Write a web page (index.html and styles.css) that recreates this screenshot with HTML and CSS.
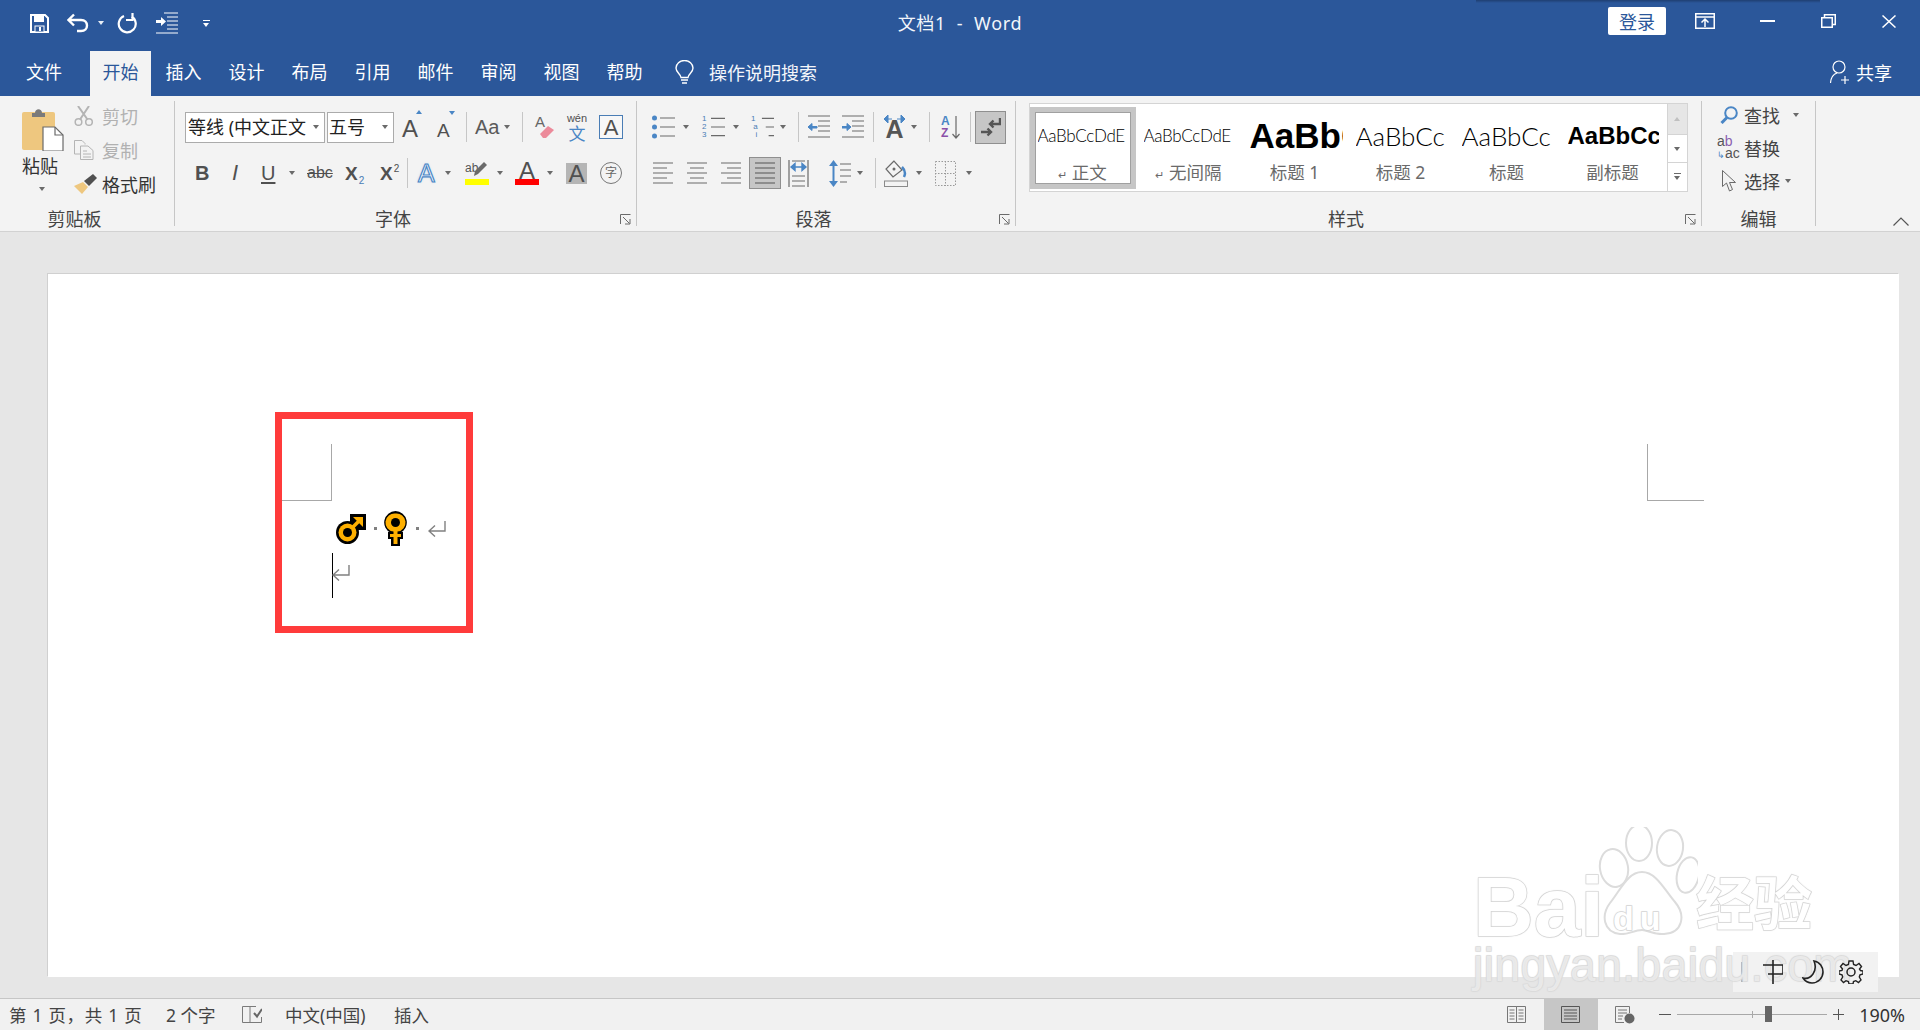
FILE: index.html
```html
<!DOCTYPE html>
<html lang="zh-CN">
<head>
<meta charset="utf-8">
<title>文档1 - Word</title>
<link rel="stylesheet" href="styles.css">
</head>
<body>
<div class="app">
  <header class="titlebar">
    <div class="qat">
      <svg width="19" height="19" viewBox="0 0 19 19"><path d="M1 1H15L18 4V18H1Z" fill="none" stroke="#fff" stroke-width="2"/><rect x="4" y="1" width="10" height="7" fill="#fff"/><rect x="5" y="12" width="9" height="6" fill="#2b579a" stroke="#fff"/><rect x="9" y="13" width="2" height="4" fill="#fff"/></svg>
      <svg width="22" height="20" viewBox="0 0 22 20"><path d="M2 7H14C18 7 20 9.500 20 12.500S18 18 14 18H10M7 1.500L1.500 7L7 12.500" fill="none" stroke="#fff" stroke-width="2.400"/></svg>
      <i class="caret white"></i>
      <svg width="21" height="21" viewBox="0 0 21 21"><path d="M6.500 3.500A8.500 8.500 0 1 0 14 3M5.500 0V7H12" fill="none" stroke="#fff" stroke-width="2.200" transform="translate(21 0) scale(-1 1)"/></svg>
      <svg width="22" height="22" viewBox="0 0 22 22"><path d="M8 1H22M11 5H22M11 9H22M11 13H22M11 17H22M0 21H22" stroke="#fff" fill="none"/><path d="M0 8H5V5L10 9.500L5 14V11H0Z" fill="#fff"/></svg>
      <span class="qat-more"></span>
    </div>
    <div class="doc-title">文档1&nbsp; -&nbsp; Word</div>
    <div class="win-controls">
      <button class="login">登录</button>
      <svg class="wc-ribbon" width="20" height="16" viewBox="0 0 20 16"><path d="M.75.750H19.250V15.250H.75ZM1 4H19M10 14V7M6.500 9.500L10 6L13.500 9.500" fill="none" stroke="#fff" stroke-width="1.500"/></svg>
      <span class="wc-min"></span>
      <svg class="wc-max" width="15" height="14" viewBox="0 0 15 14"><path d="M.750 3.750H11.250V13.250H.75ZM3.500 3.500V.750H14.250V10.500H11.500" fill="none" stroke="#fff" stroke-width="1.500"/></svg>
      <svg class="wc-close" width="14" height="13" viewBox="0 0 14 13"><path d="M.5.500L13.500 12.500M13.500.5L.5 12.500" fill="none" stroke="#fff" stroke-width="1.500"/></svg>
    </div>
  </header>

  <nav class="tabs">
    <span class="tab">文件</span>
    <span class="tab active">开始</span>
    <span class="tab">插入</span>
    <span class="tab">设计</span>
    <span class="tab">布局</span>
    <span class="tab">引用</span>
    <span class="tab">邮件</span>
    <span class="tab">审阅</span>
    <span class="tab">视图</span>
    <span class="tab">帮助</span>
    <span class="tell">
      <svg width="19" height="24" viewBox="0 0 19 24"><path d="M6 17.500C5.500 13.500 1 12.500 1 8A8.500 7.500 0 0 1 18 8C18 12.500 13.500 13.500 13 17.500ZM6 20H13M7 23H12" fill="none" stroke="#fff" stroke-width="1.400"/></svg>
      <span>操作说明搜索</span>
    </span>
    <span class="share">
      <svg width="20" height="24" viewBox="0 0 20 24"><circle cx="9" cy="7" r="6" fill="none" stroke="#fff" stroke-width="1.200"/><path d="M.5 23C1 17 4 14 7 13M15 16V24M11 20H19" fill="none" stroke="#fff" stroke-width="1.200"/></svg>
      <span>共享</span>
    </span>
  </nav>

  <section class="ribbon">
    <div class="group g-clip">
      <div class="body clip-body">
        <div class="paste">
          <svg width="42" height="44" viewBox="0 0 42 44"><rect x="0" y="5" width="33" height="38" rx="2" fill="#eec77f"/><path d="M10 6H13C13 1 20 1 20 6H23V10H10Z" fill="#7a7a7a"/><path d="M21 20H33L41 28V44H21Z" fill="#fff" stroke="#6a6a6a" stroke-width="1.200"/><path d="M33 20V28H41" fill="none" stroke="#6a6a6a" stroke-width="1.200"/></svg>
          <span class="paste-label">粘贴</span>
          <i class="caret"></i>
        </div>
        <div class="clip-list">
          <div class="clip-item off">
            <svg width="20" height="20" viewBox="0 0 20 20"><circle cx="4.500" cy="16" r="3.300" fill="none" stroke="#b4b4b4" stroke-width="1.500"/><circle cx="15" cy="16" r="3.300" fill="none" stroke="#b4b4b4" stroke-width="1.500"/><path d="M6 13.500L15 0M13.500 13.500L4 0" stroke="#b4b4b4" stroke-width="2"/></svg>
            <span>剪切</span>
          </div>
          <div class="clip-item off">
            <svg width="20" height="20" viewBox="0 0 20 20"><path d="M.5.500H8L11 3.500V4.500M.5.500V14H6" fill="none" stroke="#b4b4b4"/><path d="M6.500 6H14L19 10.500V19.500H6.500Z" fill="#f3f3f3" stroke="#b4b4b4"/><path d="M9 11H13M9 14H17M9 17H17" stroke="#b4b4b4"/></svg>
            <span>复制</span>
          </div>
          <div class="clip-item">
            <svg width="23" height="20" viewBox="0 0 23 20"><path d="M9 8L14 13L8 20L0 12Z" fill="#eec77f"/><path d="M10 7L19 0L23 4L15 12Z" fill="#505050"/></svg>
            <span>格式刷</span>
          </div>
        </div>
      </div>
      <div class="glabel"><span>剪贴板</span></div>
    </div>

    <div class="group g-font">
      <div class="body">
        <div class="row font-r1">
          <div class="select sel-font"><span>等线 (中文正文</span><i class="caret"></i></div>
          <div class="select sel-size"><span>五号</span><i class="caret"></i></div>
          <span class="lt grow">A<i class="tri-up"></i></span>
          <span class="lt shrink">A<i class="tri-down"></i></span>
          <i class="vsep"></i>
          <span class="lt aa">Aa</span>
          <i class="caret"></i>
          <i class="vsep"></i>
          <span class="eraser">
            <span class="lt era-a">A</span>
            <svg width="16" height="14" viewBox="0 0 16 14"><path d="M1 9L9 1L15 5L7 13H4Z" fill="#ec8a9a"/></svg>
          </span>
          <span class="wen"><b>wén</b><em>文</em></span>
          <span class="lt abox">A</span>
        </div>
        <div class="row font-r2">
          <span class="lt fmt-b">B</span>
          <span class="lt fmt-i">I</span>
          <span class="lt fmt-u">U</span>
          <i class="caret"></i>
          <span class="lt fmt-s">abc</span>
          <span class="lt fmt-x">X<sub>2</sub></span>
          <span class="lt fmt-x">X<sup>2</sup></span>
          <i class="vsep tall"></i>
          <span class="lt fx">A</span>
          <i class="caret"></i>
          <span class="hl">
            <span class="hl-top"><span class="lt hl-ab">ab</span><svg width="13" height="14" viewBox="0 0 13 14"><path d="M10 0L13 3L4 12L0 14L1 9Z" fill="#6a6a6a"/></svg></span>
            <i class="bar yellow"></i>
          </span>
          <i class="caret"></i>
          <span class="hl">
            <span class="lt fc">A</span>
            <i class="bar red"></i>
          </span>
          <i class="caret"></i>
          <span class="lt shade">A</span>
          <span class="ring">字</span>
        </div>
      </div>
      <div class="glabel launch"><span>字体</span><svg width="11" height="11" viewBox="0 0 11 11"><path d="M.5 10V.5H10.500M3 3L9.500 9.500M5 10H10V5" fill="none" stroke="#6a6a6a"/></svg></div>
    </div>

    <div class="group g-para">
      <div class="body">
        <div class="row para-r1">
          <svg width="23" height="24" viewBox="0 0 23 24"><circle cx="2.500" cy="3" r="2.500" fill="#4a86c5"/><circle cx="2.500" cy="12" r="2.500" fill="#4a86c5"/><circle cx="2.500" cy="21" r="2.500" fill="#4a86c5"/><path d="M8 3H23M8 12H23M8 21H23" stroke="#6a6a6a" stroke-width="1.200"/></svg>
          <i class="caret"></i>
          <span class="numlist"><span>1<br>2<br>3</span><svg width="15" height="24" viewBox="0 0 15 24"><path d="M0 3H15M0 12H15M0 21H15" stroke="#6a6a6a" stroke-width="1.200"/></svg></span>
          <i class="caret"></i>
          <span class="numlist multi"><span>1<br>&nbsp;a<br>&nbsp;&nbsp;i</span><svg width="15" height="24" viewBox="0 0 15 24"><path d="M2 3H15M6 12H15M9 21H15" stroke="#6a6a6a" stroke-width="1.200"/></svg></span>
          <i class="caret"></i>
          <i class="vsep"></i>
          <svg width="22" height="24" viewBox="0 0 22 24"><path d="M0 1H22M10 6H22M10 11H22M10 16H22M0 22H22" stroke="#6a6a6a" stroke-width="1.200"/><path d="M9 11.500H4V8.500L0 12L4 15.500V13H9Z" fill="#4a86c5" stroke="#4a86c5"/></svg>
          <svg width="22" height="24" viewBox="0 0 22 24"><path d="M0 1H22M10 6H22M10 11H22M10 16H22M0 22H22" stroke="#6a6a6a" stroke-width="1.200"/><path d="M0 11.500H5V8.500L9 12L5 15.500V13H0Z" fill="#4a86c5" stroke="#4a86c5"/></svg>
          <i class="vsep"></i>
          <span class="dir"><svg width="23" height="8" viewBox="0 0 23 8"><path d="M1 4L5 0V8ZM22 4L18 0V8ZM5 4H9M14 4H18" fill="#4a86c5" stroke="#4a86c5"/></svg><b class="lt">A</b></span>
          <i class="caret"></i>
          <i class="vsep"></i>
          <span class="sort"><span class="sort-az"><b>A</b><b>Z</b></span><svg width="8" height="24" viewBox="0 0 8 24"><path d="M4 1V23M.5 19L4 23L7.500 19" fill="none" stroke="#6a6a6a" stroke-width="1.200"/></svg></span>
          <i class="vsep"></i>
          <span class="pilcrow">
            <svg width="20" height="20" viewBox="0 0 20 20"><path d="M19 1V7H9M12.500 3.500L9 7L12.500 10.500" fill="none" stroke="#555" stroke-width="2.400"/><path d="M0 15H10M6.500 11.500L10 15L6.500 18.500M0 12" fill="none" stroke="#555" stroke-width="2.400"/></svg>
          </span>
        </div>
        <div class="row para-r2">
          <svg width="20" height="24" viewBox="0 0 20 24"><path d="M0 2H20M0 7H14M0 12H20M0 17H14M0 22H20" stroke="#6a6a6a" stroke-width="1.200"/></svg>
          <svg width="20" height="24" viewBox="0 0 20 24"><path d="M0 2H20M3 7H17M0 12H20M3 17H17M0 22H20" stroke="#6a6a6a" stroke-width="1.200"/></svg>
          <svg width="20" height="24" viewBox="0 0 20 24"><path d="M0 2H20M6 7H20M0 12H20M6 17H20M0 22H20" stroke="#6a6a6a" stroke-width="1.200"/></svg>
          <span class="just"><svg width="20" height="24" viewBox="0 0 20 24"><path d="M0 2H20M0 7H20M0 12H20M0 17H20M0 22H20" stroke="#555" stroke-width="1.200"/></svg></span>
          <svg width="21" height="27" viewBox="0 0 21 27"><path d="M1 0V27M20 0V27M4 1H17M4 26H17M4 21H17M4 16H17" stroke="#6a6a6a" stroke-width="1.200"/><path d="M3 7H18M3 7L7 3.500V10.500ZM18 7L14 3.500V10.500Z" stroke="#4a86c5" fill="#4a86c5" stroke-width="1.400"/></svg>
          <svg width="22" height="27" viewBox="0 0 22 27"><path d="M4.500 3V24" stroke="#4a86c5" stroke-width="2"/><path d="M0 6L4.500 0L9 6ZM0 21L4.500 27L9 21Z" fill="#4a86c5"/><path d="M11 4H22M11 10H22M11 16H22M11 22H18" stroke="#6a6a6a" stroke-width="1.200"/></svg>
          <i class="caret"></i>
          <i class="vsep tall"></i>
          <svg width="24" height="28" viewBox="0 0 24 28"><path d="M10 2L2 10L9 18L18 11Z" fill="none" stroke="#6a6a6a" stroke-width="1.200"/><path d="M18 8C21 11 22 14 20 18" fill="none" stroke="#4a86c5" stroke-width="2.500"/><circle cx="10" cy="10" r="1.500" fill="#6a6a6a"/><rect x=".5" y="22" width="23" height="5.500" fill="#f3f3f3" stroke="#8a8a8a"/></svg>
          <i class="caret"></i>
          <svg width="21" height="25" viewBox="0 0 21 25"><path d="M.5.500H20.500V24.500H.5ZM10.500 0V25M0 12.500H21" fill="none" stroke="#999" stroke-dasharray="1.500 1.500"/></svg>
          <i class="caret"></i>
        </div>
      </div>
      <div class="glabel launch"><span>段落</span><svg width="11" height="11" viewBox="0 0 11 11"><path d="M.5 10V.5H10.500M3 3L9.500 9.500M5 10H10V5" fill="none" stroke="#6a6a6a"/></svg></div>
    </div>

    <div class="group g-styles">
      <div class="gallery">
        <div class="style-list">
          <div class="style selected"><div class="sample s-body">AaBbCcDdE</div><div class="slabel"><i>↵</i> 正文</div></div>
          <div class="style"><div class="sample s-body">AaBbCcDdE</div><div class="slabel"><i>↵</i> 无间隔</div></div>
          <div class="style"><div class="sample s-h1">AaBbC</div><div class="slabel">标题 1</div></div>
          <div class="style"><div class="sample s-h2">AaBbCc</div><div class="slabel">标题 2</div></div>
          <div class="style"><div class="sample s-h2">AaBbCc</div><div class="slabel">标题</div></div>
          <div class="style"><div class="sample s-sub">AaBbCc</div><div class="slabel">副标题</div></div>
        </div>
        <div class="scroller">
          <span class="sc-up"><i class="tri-s up"></i></span>
          <span class="sc-down"><i class="caret"></i></span>
          <span class="sc-more"><i class="more"></i></span>
        </div>
      </div>
      <div class="glabel launch"><span>样式</span><svg width="11" height="11" viewBox="0 0 11 11"><path d="M.5 10V.5H10.500M3 3L9.500 9.500M5 10H10V5" fill="none" stroke="#6a6a6a"/></svg></div>
    </div>

    <div class="group g-edit">
      <div class="edit-list">
        <div class="edit-item"><svg width="18" height="18" viewBox="0 0 18 18"><circle cx="11" cy="7" r="5.800" fill="none" stroke="#4a86c5" stroke-width="2"/><path d="M7 11.500L1.500 17" stroke="#4a86c5" stroke-width="3"/></svg><span>查找</span><i class="caret find-caret"></i></div>
        <div class="edit-item"><span class="abac"><span><b>a</b><u>b</u></span><span><i>↳</i>ac</span></span><span>替换</span></div>
        <div class="edit-item"><svg width="15" height="22" viewBox="0 0 15 22"><path d="M1 .5V16.500L5 13L8 21L11 19.500L8 12.500H14Z" fill="#f3f3f3" stroke="#6a6a6a"/></svg><span>选择</span><i class="caret sel-caret"></i></div>
      </div>
      <div class="glabel"><span>编辑</span></div>
    </div>

    <div class="collapse"><svg width="16" height="9" viewBox="0 0 16 9"><path d="M.5 8.500L8 1L15.500 8.500" fill="none" stroke="#555" stroke-width="1.200"/></svg></div>
  </section>

  <main class="docarea">
    <article class="page">
      <div class="crop crop-l"></div>
      <div class="crop crop-r"></div>
      <div class="line1">
        <svg width="30" height="30" viewBox="0 0 30 30"><rect x="14" y="0" width="16" height="16" fill="#000"/><path d="M12 18L23 7" stroke="#000" stroke-width="7"/><circle cx="11.500" cy="18.500" r="11.500" fill="#000"/><circle cx="11.500" cy="18.500" r="9" fill="#ffb000"/><path d="M17 3H27V13Z" fill="#ffb000"/><path d="M15 15L23 7" stroke="#ffb000" stroke-width="3.500"/><circle cx="11.500" cy="18.500" r="4.500" fill="#000"/></svg>
        <i class="dot"></i>
        <svg width="23" height="35" viewBox="0 0 23 35"><path d="M11.500 0A11.500 11.500 0 0 1 16 22V21H19V28H16V35H7V28H4V21H7V22A11.500 11.500 0 0 1 11.500 0Z" fill="#000"/><path d="M11.500 2.500A9 9 0 0 1 13.500 20.500V23H17V26H13.500V33H9.500V26H6V23H9.500V20.500A9 9 0 0 1 11.500 2.500Z" fill="#ffb000"/><circle cx="11.500" cy="11.500" r="4.500" fill="#000"/></svg>
        <i class="dot"></i>
        <svg width="18" height="16" viewBox="0 0 18 16"><path d="M17 0V10H1M7 4.500L1 10L7 15.500" fill="none" stroke="#808080" stroke-width="1.400"/></svg>
      </div>
      <div class="line2">
        <i class="cursor"></i>
        <svg width="18" height="16" viewBox="0 0 18 16"><path d="M17 0V10H1M7 4.500L1 10L7 15.500" fill="none" stroke="#808080" stroke-width="1.400"/></svg>
      </div>
      <div class="redbox"></div>
    </article>
    <div class="floatbar">
      <i class="fb-bar"></i>
      <svg width="20" height="24" viewBox="0 0 20 24"><path d="M10 0V24M0 5H20V14H5" fill="none" stroke="#222" stroke-width="1.600"/></svg>
      <svg width="22" height="24" viewBox="0 0 22 24"><path d="M12 1C18 2 21 7 21 12C21 18 16 23 10 23C6 23 3 21 1 18C9 20 16 11 12 1Z" fill="none" stroke="#222" stroke-width="1.600"/></svg>
      <svg width="24" height="24" viewBox="0 0 24 24"><circle cx="12" cy="12" r="4" fill="none" stroke="#222" stroke-width="1.500"/><path d="M10 1H14L14.600 4.500L17 5.500L20 3.500L22.500 6.500L20.500 9L21.500 10.500L24 11V14L21 14.800L20.300 17L22 20L19.500 22.500L16.800 20.700L14.500 21.600L14 24H10L9.400 21.600L7 20.700L4.500 22.500L2 20L3.700 17L3 14.800L0 14V11L3 10.500L3.500 9L1.500 6.500L4 3.500L7 5.500L9.400 4.500Z" fill="none" stroke="#222" stroke-width="1.400"/></svg>
    </div>
    <div class="watermark">
      <svg class="paw" width="100" height="108" viewBox="0 0 100 108"><ellipse cx="16" cy="41" rx="14" ry="19" transform="rotate(-10 16 41)"/><ellipse cx="41" cy="16" rx="13" ry="18"/><ellipse cx="72" cy="21" rx="13" ry="18" transform="rotate(8 72 21)"/><ellipse cx="90" cy="48" rx="11" ry="18" transform="rotate(12 90 48)"/><path d="M44 45C58 45 66 62 77 75C88 88 85 106 66 107C56 108 50 103 44 103C36 103 30 108 22 107C5 105 3 88 12 76C23 62 30 45 44 45Z"/></svg>
      <span class="wm wm-bai">Bai</span>
      <span class="wm wm-du">du</span>
      <span class="wm wm-jy">经验</span>
      <span class="wm wm-url">jingyan.baidu.com</span>
    </div>
  </main>

  <footer class="status">
    <span class="st-a">第 1 页，共 1 页</span>
    <span class="st-b">2 个字</span>
    <span class="st-c"><svg width="20" height="18" viewBox="0 0 20 18"><path d="M.5.500H8V16.500H.5ZM8 .5H14M8 16.500H19.500V11M14 .5" fill="none" stroke="#7a7a7a"/><path d="M12 7L15 10.500L20 3" fill="none" stroke="#666" stroke-width="2"/></svg></span>
    <span class="st-d">中文(中国)</span>
    <span class="st-e">插入</span>
    <div class="st-right">
      <span class="view"><svg width="19" height="17" viewBox="0 0 19 17"><path d="M.5.500H9.500V16.500H.5ZM9.500.5H18.500V16.500H9.500ZM2.500 4H7.500M2.500 7H7.500M2.500 10H7.500M2.500 13H7.500M11.500 4H16.500M11.500 7H16.500M11.500 10H16.500M11.500 13H16.500" fill="none" stroke="#777"/></svg></span>
      <span class="view on"><svg width="19" height="17" viewBox="0 0 19 17"><path d="M.5.500H18.500V16.500H.5ZM3 4H16M3 7H16M3 10H16M3 13H16" fill="none" stroke="#555"/></svg></span>
      <span class="view"><svg width="20" height="18" viewBox="0 0 20 18"><path d="M9 16.500H.5V.5H14.500V7M3 4H12M3 7H12M3 10H8M3 13H7" fill="none" stroke="#777"/><circle cx="14.500" cy="12.500" r="5" fill="#666"/></svg></span>
      <span class="zoom-minus"></span>
      <span class="slider"><i class="tick"></i><i class="thumb"></i></span>
      <span class="zoom-plus"></span>
      <span class="pct">190%</span>
    </div>
  </footer>
</div>
</body>
</html>
```

FILE: styles.css
```css
* { box-sizing: border-box; }
html, body { margin: 0; padding: 0; height: 100%; overflow: hidden; }
body {
  font-family: "Noto Sans", "Noto Sans CJK SC", sans-serif;
  font-size: 18px;
  color: #444;
}
i, em { font-style: normal; }
svg { display: block; }
.app { width: 1920px; height: 1030px; display: flex; flex-direction: column; position: relative; }

/* title bar */
.titlebar {
  height: 51px; background: #2b579a; color: #fff; position: relative;
  display: grid; grid-template-columns: 1fr auto 1fr; align-items: center; flex: none;
}
.titlebar::before {
  content: ""; position: absolute; left: 1476px; top: 0; width: 344px; height: 3px;
  background: linear-gradient(#1f3f72, #2b579a);
}
.qat {
  display: grid; grid-template-columns: 37px 31px 19px 39px 47px auto;
  align-items: center; justify-items: start; padding: 0 0 5px 30px;
}
.caret {
  display: block; width: 0; height: 0;
  border-left: 3.5px solid transparent; border-right: 3.5px solid transparent;
  border-top: 4px solid #6a6a6a;
}
.caret.white { border-top-color: #e8eef6; }
.qat-more {
  display: block; width: 7px; height: 7px; border-top: 1px solid #fff; position: relative;
}
.qat-more::after {
  content: ""; display: block; margin-top: 2px; width: 0; height: 0;
  border-left: 3.5px solid transparent; border-right: 3.5px solid transparent; border-top: 4px solid #fff;
}
.doc-title { font-size: 18px; white-space: nowrap; color: #f2f5fa; padding-bottom: 7px; letter-spacing: .7px; }
.win-controls {
  display: grid; grid-template-columns: 87px 65px 61px 61px 38px;
  align-items: center; justify-items: start; justify-content: end; height: 100%; padding-bottom: 9px;
}
.login {
  width: 58px; height: 28px; border: 0; border-radius: 2px; background: #fff; color: #2b579a;
  font: 18px "Noto Sans CJK SC", sans-serif; padding: 0; display: block;
}
.wc-min { display: block; width: 15px; height: 2px; background: #fff; }

/* tabs */
.tabs { height: 45px; background: #2b579a; flex: none; display: flex; align-items: stretch; padding-left: 26px; color: #fff; }
.tab { width: 63px; text-align: center; line-height: 42px; font-size: 18px; white-space: nowrap; }
.tab:first-child { text-align: left; }
.tab.active { background: #f3f3f3; color: #2b579a; width: 61px; margin: 0 1px 0 1px; }
.tell { margin-left: 19px; display: flex; align-items: center; gap: 15px; color: #f4f6fa; padding-bottom: 3px; }
.share { margin-left: auto; padding-right: 28px; display: flex; align-items: center; gap: 6px; padding-bottom: 3px; }

/* ribbon */
.ribbon {
  height: 136px; background: #f3f3f3; flex: none; display: flex; padding-top: 5px;
  border-bottom: 1px solid #d2d2d2; position: relative;
}
.group { height: 125px; border-right: 1px solid #c6c6c6; display: flex; flex-direction: column; flex: none; }
.g-clip { width: 175px; }
.g-font { width: 462px; }
.g-para { width: 379px; }
.g-styles { width: 686px; }
.g-edit { width: 114px; }
.body { padding-top: 5px; }
.glabel { margin-top: auto; margin-bottom: -4px; height: 21px; display: flex; align-items: center; line-height: 21px; font-size: 18px; color: #444; }
.glabel > span { flex: 1; text-align: center; }
.g-clip .glabel { padding-right: 25px; }
.launch { padding-right: 5px; }
.launch svg { margin-left: 9px; }

.row { display: grid; align-items: center; justify-items: start; }
.font-r1 { height: 42px; padding-left: 10px; grid-template-columns: 142px 75px 35px 29px 9px 29px 18px 13px 31px 33px auto; }
.font-r2 { height: 50px; padding-left: 20px; grid-template-columns: 34px 32px 28px 18px 38px 35px 27px 11px 27px 20px 32px 18px 32px 19px 34px auto; }
.para-r1 { height: 42px; padding-left: 15px; grid-template-columns: 31px 19px 31px 18px 29px 18px 10px 34px 31px 10px 28px 18px 12px 29px 5px auto; }
.para-r2 { height: 50px; padding-left: 16px; grid-template-columns: 34px 34px 28px 39px 41px 28px 18px 9px 32px 19px 31px auto; }
.vsep { display: block; width: 1px; height: 30px; background: #c6c6c6; }
.vsep.tall { height: 30px; }
.lt { font-family: "Liberation Sans", sans-serif; color: #505050; display: block; line-height: 1; }

/* clipboard */
.clip-body { display: flex; padding-left: 22px; padding-top: 0; }
.paste { width: 52px; display: flex; flex-direction: column; padding-top: 6px; }
.paste-label { font-size: 18px; line-height: 24px; margin-top: 3px; color: #333; width: 36px; text-align: left; white-space: nowrap; }
.paste .caret { margin: 9px 0 0 17px; }
.clip-list { display: flex; flex-direction: column; margin-top: -2px; }
.clip-item { display: grid; grid-template-columns: 28px auto; align-items: center; justify-items: start; height: 34px; color: #333; white-space: nowrap; }
.clip-item.off { color: #b1b1b1; }

/* font */
.select { height: 31px; background: #fff; border: 1px solid #ababab; display: flex; align-items: center; justify-content: space-between; color: #222; font-size: 18px; line-height: 1; white-space: nowrap; overflow: hidden; }
.sel-font { width: 140px; padding: 0 5px 0 2px; }
.sel-size { width: 67px; padding: 0 5px 0 1px; }
.grow { position: relative; font-size: 24px; padding-top: 3px; }
.shrink { position: relative; font-size: 19px; padding-top: 6px; }
.tri-up, .tri-down { position: absolute; width: 0; height: 0; border-left: 3px solid transparent; border-right: 3px solid transparent; }
.tri-up { border-bottom: 4px solid #4a86c5; left: 14px; top: -4px; }
.tri-down { border-top: 4px solid #4a86c5; left: 12px; top: -4px; }
.aa { font-size: 20px; color: #5a5a5a; }
.eraser { display: block; position: relative; width: 20px; height: 26px; }
.era-a { font-size: 15px; color: #666; }
.eraser svg { position: absolute; left: 4px; top: 11px; }
.wen { display: flex; flex-direction: column; align-items: center; line-height: 1; width: 22px; }
.wen b { font: 400 11px "Liberation Sans", sans-serif; color: #505050; }
.wen em { font-size: 17px; color: #4a86c5; line-height: 17px; margin-top: 1px; }
.abox { width: 24px; height: 24px; border: 1px solid #4a7db5; font-size: 22px; text-align: center; line-height: 23px; background: #f7f7f7; }
.fmt-b { font-size: 20px; font-weight: 700; }
.fmt-i { font-size: 22px; font-style: italic; padding-left: 3px; }
.fmt-u { font-size: 20px; text-decoration: underline; text-underline-offset: 2px; }
.fmt-s { font-size: 16px; text-decoration: line-through; }
.fmt-x { font-size: 19px; font-weight: 700; }
.fmt-x sub, .fmt-x sup { font-size: 10px; font-weight: 400; color: #4a7db5; line-height: 0; margin-left: 1px; }
.fmt-x sup { color: #505050; }
.fx { font-size: 25px; color: #fff; -webkit-text-stroke: 1.2px #4a86c5; text-shadow: 0 0 3px #bcd4ee; }
.hl { display: flex; flex-direction: column; width: 24px; align-items: stretch; }
.hl-top { display: flex; height: 17px; align-items: flex-start; }
.hl-ab { font-size: 12px; color: #555; margin-right: -4px; }
.fc { font-size: 24px; line-height: 17px; height: 17px; text-align: center; overflow: visible; }
.bar { display: block; height: 6px; }
.bar.yellow { background: #ff0; }
.bar.red { background: #f00; }
.shade { width: 21px; height: 21px; background: #b5b5b5; font-size: 24px; text-align: center; line-height: 22px; }
.ring { width: 22px; height: 22px; border: 1.500px solid #777; border-radius: 50%; font-size: 12px; line-height: 19px; text-align: center; color: #666; }

/* paragraph */
.numlist { display: flex; gap: 3px; align-items: center; width: 23px; }
.numlist > span { font: 8px/8px "Liberation Sans", sans-serif; color: #4a7db5; width: 6px; white-space: nowrap; }
.numlist.multi > span { width: 9px; }
.numlist.multi { gap: 0; }
.dir { display: flex; flex-direction: column; align-items: center; width: 23px; }
.dir b { font-size: 25px; font-weight: 700; margin-top: -5px; color: #555; line-height: 22px; }
.sort { display: flex; gap: 2px; width: 20px; align-items: center; }
.sort-az { display: flex; flex-direction: column; font: 700 12px/12px "Liberation Sans", sans-serif; }
.sort-az b:first-child { color: #4a86c5; }
.sort-az b:last-child { color: #8a4fa8; }
.pilcrow { width: 31px; height: 33px; background: #c6c6c6; border: 1px solid #8f8f8f; display: flex; align-items: center; justify-content: center; }
.just { width: 32px; height: 32px; background: #c6c6c6; border: 1px solid #8f8f8f; display: flex; align-items: center; justify-content: center; }

/* styles */
.gallery { margin: 2px 0 0 12.500px; width: 659px; height: 89px; background: #fff; border: 1px solid #d4d4d4; display: flex; }
.style-list { flex: 1; display: flex; padding-top: 3px; overflow: hidden; }
.style { width: 106px; height: 82px; flex: none; border: 5px solid transparent; color: #6a6a6a; display: flex; flex-direction: column; }
.style.selected { border-color: #c6c6c6; box-shadow: inset 0 0 0 1px #a0a0a0; }
.sample { height: 48px; line-height: 48px; margin-left: 3px; width: 91px; overflow: hidden; white-space: nowrap; color: #000; }
.s-body { font: 300 17px/48px "Lato", "Liberation Sans", sans-serif; letter-spacing: -.3px; }
.s-h1 { font: 700 35px/48px "Liberation Sans", sans-serif; width: 93px; }
.s-h2 { font: 300 26px/48px "Lato", "Liberation Sans", sans-serif; }
.s-sub { font: 700 24px/48px "Liberation Sans", sans-serif; }
.slabel { height: 24px; line-height: 24px; text-align: center; font-size: 17.500px; white-space: nowrap; color: #6a6a6a; }
.slabel i { font-size: 11px; }
.scroller { width: 20px; flex: none; display: flex; flex-direction: column; border-left: 1px solid #d4d4d4; }
.scroller span { display: flex; align-items: center; justify-content: center; border-bottom: 1px solid #d4d4d4; }
.sc-up { height: 31px; background: #e6e6e6; }
.sc-down { height: 28px; }
.sc-more { height: 28px; border-bottom: 0 !important; }
.tri-s.up { width: 0; height: 0; border-left: 3.500px solid transparent; border-right: 3.500px solid transparent; border-bottom: 4px solid #c0c0c0; }
.more { display: block; width: 7px; height: 8px; border-top: 1px solid #6a6a6a; position: relative; }
.more::after { content: ""; position: absolute; top: 2px; left: 0; border-left: 3.500px solid transparent; border-right: 3.500px solid transparent; border-top: 4px solid #6a6a6a; }

/* editing */
.edit-list { display: flex; flex-direction: column; margin-top: -2.500px; }
.edit-item { display: flex; align-items: center; height: 33px; padding-left: 15px; color: #444; white-space: nowrap; position: relative; }
.edit-item > :first-child { width: 27px; }
.edit-item svg:first-child { margin-left: 3px; width: 18px; margin-right: 6px; }
.find-caret { margin-left: 13px; }
.sel-caret { margin-left: 5px; }
.abac { display: flex; flex-direction: column; font: 14px/12px "Liberation Sans", sans-serif; color: #555; }
.abac u { text-decoration: none; color: #8a5fb0; }
.abac b { font-weight: 400; }
.abac i { color: #4a86c5; font-size: 9px; }
.collapse { position: absolute; right: 11px; bottom: 5px; }

/* document */
.docarea { flex: 1; background: #e6e6e6; overflow: hidden; position: relative; padding: 42px 21px 0 48px; }
.page { background: #fff; height: 703px; box-shadow: -1px -1px 0 #d0d0d0; position: relative; padding: 237px 0 0 288px; }
.crop { position: absolute; top: 170px; height: 57px; border-bottom: 1px solid #a8a8a8; }
.crop-l { left: 234px; width: 50px; border-right: 1px solid #a8a8a8; }
.crop-r { left: 1599px; width: 57px; border-left: 1px solid #a8a8a8; }
.line1 { display: grid; grid-template-columns: 38px 10px 32px 12px auto; align-items: center; justify-items: start; height: 35px; }
.dot { display: block; width: 3px; height: 3px; background: #808080; }
.line2 { display: flex; align-items: center; margin: 7px 0 0 -4px; }
.cursor { display: block; width: 1px; height: 45px; background: #000; margin-right: -1px; }
.line2 svg { margin-bottom: 5px; }
.redbox { position: absolute; left: 227px; top: 138px; width: 198px; height: 221px; border: 7px solid #ff3b3b; }
.floatbar {
  position: absolute; left: 1733px; top: 720px; width: 145px; height: 40px; background: #f2f2f2;
  display: flex; align-items: center; padding-left: 8px;
}
.fb-bar { display: block; width: 2px; height: 20px; background: #b5b5b5; margin-right: 20px; }
.floatbar svg { position: relative; z-index: 2; }
.floatbar svg:nth-of-type(2) { margin-left: 19px; }
.floatbar svg:nth-of-type(3) { margin-left: 15px; }

/* watermark */
.watermark { position: absolute; left: 1470px; top: 600px; width: 360px; height: 170px; }
.paw { position: absolute; left: 128px; top: -5px; }
.paw ellipse, .paw path { fill: #fff; stroke: #dcdcdc; stroke-width: 2; }
.wm { position: absolute; color: #fff; white-space: nowrap; line-height: 1; -webkit-text-stroke: 1.500px #d6d6d6; paint-order: stroke fill; text-shadow: 0 0 2px #d0d0d0; }
.wm-bai { left: 3px; top: 33px; font: 700 84px/1 "Liberation Sans", sans-serif; }
.wm-du { left: 143px; top: 69px; font: 700 34px/1 "Liberation Sans", sans-serif; letter-spacing: 6px; }
.wm-jy { left: 226px; top: 39px; font: 700 58px/1 "Noto Sans CJK SC", sans-serif; }
.wm-url { left: 3px; top: 110px; font: 400 46px/1 "Liberation Sans", sans-serif; letter-spacing: .5px; color: rgba(255,255,255,.5); -webkit-text-stroke-color: #dedede; }

/* status */
.status { height: 32px; flex: none; background: #f1f1f1; border-top: 1px solid #c6c6c6; display: flex; align-items: center; padding-left: 9px; font-size: 17.500px; color: #444; white-space: nowrap; }
.st-a { width: 157px; letter-spacing: .7px; }
.st-b { width: 76px; }
.st-c { width: 43px; }
.st-d { width: 109px; }
.st-right { margin-left: auto; display: flex; align-items: center; height: 100%; padding-right: 15px; }
.view { width: 54px; height: 100%; display: flex; align-items: center; justify-content: center; }
.view.on { background: #c6c6c6; }
.zoom-minus, .zoom-plus { display: block; position: relative; height: 1.500px; background: #555; }
.zoom-minus { width: 12px; margin-left: 7px; }
.zoom-plus { width: 11px; margin-left: 6px; }
.zoom-plus::after { content: ""; position: absolute; left: 5px; top: -5px; width: 1.500px; height: 11px; background: #555; }
.slider { display: block; width: 150px; height: 1px; background: #a8a8a8; margin-left: 6px; position: relative; }
.tick { position: absolute; left: 75px; top: -3px; width: 1px; height: 7px; background: #a8a8a8; }
.thumb { position: absolute; left: 88px; top: -8px; width: 7px; height: 16px; background: #666; }
.pct { margin-left: 15.500px; font-size: 18px; color: #333; }
```
